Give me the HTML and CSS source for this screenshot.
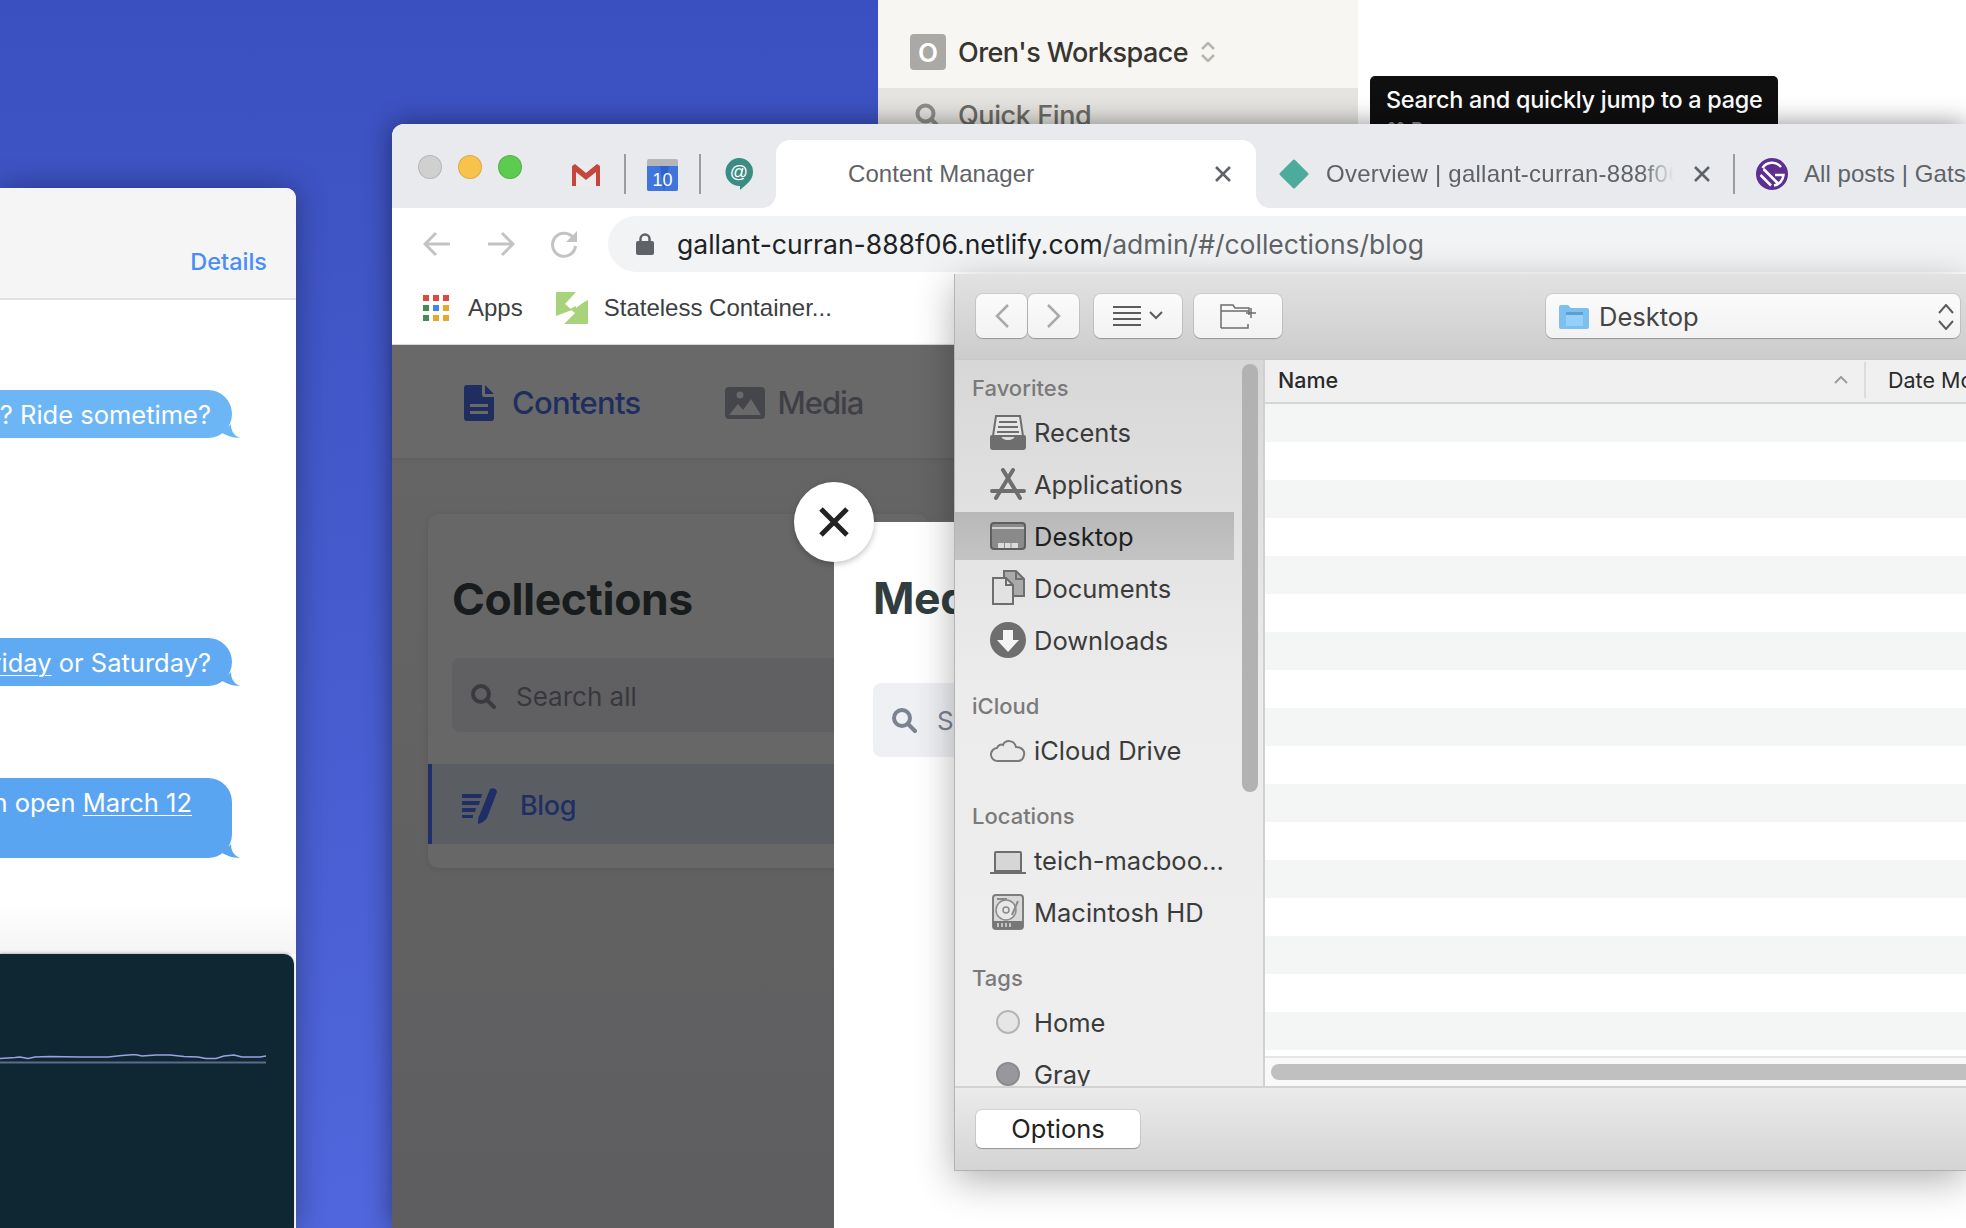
FILE: index.html
```html
<!DOCTYPE html>
<html lang="en">
<head>
    <meta charset="UTF-8">
    <title>Desktop</title>
    <link rel="stylesheet" href="styles.css">
</head>
<body>
<div class="desktop">

    <!-- notion window, mostly hidden behind chrome -->
    <div class="window notion">
        <div class="notion-side">
            <div class="workspace">
                <span class="workspace-badge">O</span>
                <span class="workspace-name">Oren's Workspace</span>
                <svg class="updown" width="14" height="20" viewBox="0 0 14 20"><path d="M1 7l6-6 6 6M1 13l6 6 6-6"/></svg>
            </div>
            <div class="quick-find">
                <svg width="24" height="24" viewBox="0 0 24 24" class="quick-icon"><circle cx="10.5" cy="10.5" r="8"/><path d="M16 16l6 6"/></svg>
                <span>Quick Find</span>
            </div>
        </div>
        <div class="notion-main">
            <div class="tooltip">
                <div>Search and quickly jump to a page</div>
                <div class="tooltip-key">⌘ P</div>
            </div>
        </div>
    </div>

    <!-- messages window, cut by the left edge -->
    <div class="window messages">
        <div class="msg-head"><a class="msg-details">Details</a></div>
        <div class="msg-thread">
            <div class="bubble bubble-a">? Ride sometime?
                <svg class="tail" width="20" height="14" viewBox="0 0 20 14"><path d="M0 6C6 4 10 2 11 0c0 6 2 11 9 14C12 14 6 11 0 8z"/></svg>
            </div>
            <div class="bubble bubble-b"><u>Friday</u> or Saturday?
                <svg class="tail" width="20" height="14" viewBox="0 0 20 14"><path d="M0 6C6 4 10 2 11 0c0 6 2 11 9 14C12 14 6 11 0 8z"/></svg>
            </div>
            <div class="bubble bubble-c">n open <u>March 12</u>
                <svg class="tail" width="20" height="14" viewBox="0 0 20 14"><path d="M0 6C6 4 10 2 11 0c0 6 2 11 9 14C12 14 6 11 0 8z"/></svg>
            </div>
        </div>
        <div class="terminal">
            <svg width="266" height="10" viewBox="0 0 266 10" class="spark">
                <path class="spark-base" d="M0 8.500H266"/>
                <path class="spark-line" d="M0 4.500l15-1 5-.5 8 1.500 7-1.500 15-.5 30 .5 28 0 14-1.500 13-1 7 1.500 14-1 14 0 14 1.500 14 .5 8 1.500 10 0 8-2.500 10-1 8 2 18 0 6-1 8 1.500 6 1 12-1 5 0"/>
            </svg>
        </div>
    </div>

    <!-- browser -->
    <div class="window chrome">
        <div class="tabstrip">
            <div class="pinned">
                <div class="lights">
                    <span class="light light-grey"></span>
                    <span class="light light-yellow"></span>
                    <span class="light light-green"></span>
                </div>
                <svg class="pin-gmail" width="28" height="22" viewBox="0 0 28 22">
                    <path fill="#ececec" d="M1 2h26v20H1z"/>
                    <path fill="#c5473c" d="M0 2v20h4V8l10 8 10-8v14h4V2l-3-2-11 9L3 0z"/>
                </svg>
                <span class="pin-sep"></span>
                <svg class="pin-cal" width="31" height="32" viewBox="0 0 31 32">
                    <path fill="#b4b6ba" d="M2 0h27a2 2 0 0 1 2 2v8H0V2a2 2 0 0 1 2-2z"/>
                    <path fill="#2f62cc" d="M0 7h31v23a2 2 0 0 1-2 2H2a2 2 0 0 1-2-2z"/>
                    <path fill="#4f86e8" d="M0 7h13l4 25H2a2 2 0 0 1-2-2zM31 7v23a2 2 0 0 1-2 2H17l5-25z" opacity=".55"/>
                    <text x="15.500" y="27" class="cal-num">10</text>
                </svg>
                <span class="pin-sep"></span>
                <svg class="pin-chat" width="28" height="32" viewBox="0 0 28 32">
                    <path fill="#3b8d84" d="M14 0a14 14 0 0 1 14 14c0 8-6 12-13 18v-4A14 14 0 0 1 14 0z"/>
                    <text x="14" y="20" class="chat-at">@</text>
                </svg>
            </div>
            <div class="tab tab-active">
                <span class="tab-title">Content Manager</span>
                <svg class="tab-x" width="18" height="18" viewBox="0 0 18 18"><path d="M2 2l14 14M16 2L2 16"/></svg>
            </div>
            <div class="tab tab-next">
                <svg width="30" height="30" viewBox="0 0 30 30"><path fill="#4dab9c" stroke="#4dab9c" stroke-width="3" stroke-linejoin="round" d="M15 2l13 13-13 13L2 15z"/></svg>
                <span class="tab-title tab-fade">Overview | gallant-curran-888f06</span>
                <svg class="tab-x" width="18" height="18" viewBox="0 0 18 18"><path d="M2 2l14 14M16 2L2 16"/></svg>
            </div>
            <div class="tab tab-last">
                <span class="tab-sep"></span>
                <svg width="32" height="32" viewBox="0 0 32 32">
                    <circle cx="16" cy="16" r="16" fill="#5d2f91"/>
                    <g fill="none" stroke="#fff" stroke-width="2.500">
                        <path d="M6.500 10A11.500 11.500 0 0 1 25 9"/>
                        <path d="M4.500 17L15 27.500M7.500 11L21.500 25"/>
                        <path d="M19 17h8.500A11.500 11.500 0 0 1 18 27.500"/>
                    </g>
                </svg>
                <span class="tab-title">All posts | Gatsby Starter</span>
            </div>
        </div>

        <div class="toolbar">
            <svg class="nav-arrow" width="28" height="26" viewBox="0 0 28 26"><path d="M27 13H2M13 2L2 13l11 11"/></svg>
            <svg class="nav-arrow" width="28" height="26" viewBox="0 0 28 26"><path d="M1 13h25M15 2l11 11-11 11"/></svg>
            <svg class="nav-arrow" width="28" height="28" viewBox="0 0 28 28"><path d="M24 9a11.500 11.500 0 1 0 1.500 7"/><path class="nav-fill" d="M27 1v11H16z"/></svg>
            <div class="omnibox">
                <svg width="18" height="22" viewBox="0 0 18 22"><path fill="none" stroke="#5f6368" stroke-width="2.500" d="M4.500 10V6a4.500 4.500 0 0 1 9 0v4"/><rect y="8" width="18" height="14" rx="2" fill="#5f6368"/></svg>
                <span class="url"><span class="url-host">gallant-curran-888f06.netlify.com</span>/admin/#/collections/blog</span>
            </div>
        </div>

        <div class="bookmarks">
            <div class="bookmark">
                <svg width="26" height="26" viewBox="0 0 26 26">
                    <path fill="#e0483d" d="M0 0h6v6H0zM10 0h6v6h-6zM20 0h6v6h-6z"/>
                    <path fill="#3f8f55" d="M0 10h6v6H0zM0 20h6v6H0z"/>
                    <path fill="#4285e8" d="M10 10h6v6h-6z"/>
                    <path fill="#e9a62f" d="M20 10h6v6h-6zM10 20h6v6h-6zM20 20h6v6h-6z"/>
                </svg>
                <span>Apps</span>
            </div>
            <div class="bookmark bookmark-second">
                <svg width="32" height="32" viewBox="0 0 32 32">
                    <path fill="#a9d37a" d="M0 0h20L9 12l7 6-16 6z"/>
                    <path fill="#a9d37a" d="M32 8v24H8l11-11-5-4z"/>
                    <path fill="#fff" d="M20 9l8-5v6l-8 6z"/>
                </svg>
                <span>Stateless Container...</span>
            </div>
        </div>

        <div class="cms">
            <div class="cms-nav">
                <div class="cms-link cms-link-on">
                    <svg width="30" height="36" viewBox="0 0 30 36">
                        <path fill="#1f2e5e" d="M3 0h15v10a2 2 0 0 0 2 2h10v21a3 3 0 0 1-3 3H3a3 3 0 0 1-3-3V3a3 3 0 0 1 3-3zM21 0l9 9h-9z"/>
                        <path fill="#696969" d="M6 19h18v3H6zM6 26h18v3H6z"/>
                    </svg>
                    <span>Contents</span>
                </div>
                <div class="cms-link">
                    <svg width="40" height="32" viewBox="0 0 40 32">
                        <rect width="40" height="32" rx="4" fill="#45464c"/>
                        <circle cx="15" cy="8" r="3.500" fill="#696969"/>
                        <path fill="#696969" d="M4 28l9-11 5 6 8-11 10 16z"/>
                    </svg>
                    <span>Media</span>
                </div>
            </div>
            <div class="cms-body">
                <div class="collections">
                    <h1 class="collections-title">Collections</h1>
                    <div class="search search-dim">
                        <svg class="search-icon" width="26" height="26" viewBox="0 0 26 26"><circle cx="11" cy="11" r="8"/><path d="M17 17l7 7"/></svg>
                        <span>Search all</span>
                    </div>
                    <div class="blog-row">
                        <svg width="36" height="36" viewBox="0 0 36 36">
                            <path fill="#1f2e66" d="M0 6h20l-1 4H0zM0 13h18l-1 4H0zM0 20h14l-1 4H0zM0 27h11v3H0z"/>
                            <path fill="#1f2e66" d="M28 1c3-2 7 0 7 3L25 30c-2 3-5 5-9 6 0-4 0-7 2-10z"/>
                        </svg>
                        <span>Blog</span>
                    </div>
                </div>
            </div>

            <!-- media library modal -->
            <div class="modal">
                <h1 class="modal-title">Media</h1>
                <div class="search search-light">
                    <svg class="search-icon" width="26" height="26" viewBox="0 0 26 26"><circle cx="11" cy="11" r="8"/><path d="M17 17l7 7"/></svg>
                    <span>Search</span>
                </div>
            </div>
            <div class="modal-close">
                <svg width="30" height="30" viewBox="0 0 30 30"><path d="M2 2l26 26M28 2L2 28"/></svg>
            </div>
        </div>
    </div>

    <!-- file picker -->
    <div class="window dialog">
        <div class="dlg-toolbar">
            <div class="dlg-pair">
                <div class="dlg-btn dlg-nav"><svg width="14" height="24" viewBox="0 0 14 24"><path d="M13 1L2 12l11 11"/></svg></div>
                <div class="dlg-btn dlg-nav"><svg width="14" height="24" viewBox="0 0 14 24"><path d="M1 1l11 11L1 23"/></svg></div>
            </div>
            <div class="dlg-btn dlg-view">
                <svg class="dlg-dark" width="50" height="22" viewBox="0 0 50 22"><path d="M0 2h28M0 8h28M0 14h28M0 20h28M37 7l6 6 6-6"/></svg>
            </div>
            <div class="dlg-btn dlg-folder">
                <svg class="dlg-light" width="36" height="26" viewBox="0 0 36 26"><path d="M1 25V2h12l2 3h14v7M1 25h27v-4M1 8h28M31 5v10M26 10h10"/></svg>
            </div>
            <div class="dlg-btn dlg-popup">
                <svg width="30" height="24" viewBox="0 0 30 24">
                    <path fill="#7cc0f0" d="M0 2a2 2 0 0 1 2-2h7l3 3h16a2 2 0 0 1 2 2v17a2 2 0 0 1-2 2H2a2 2 0 0 1-2-2z"/>
                    <path fill="#94d0f8" d="M7 7h17v14H7z"/>
                    <path fill="#5f9fd0" d="M7 7h17v3H7z"/>
                </svg>
                <span class="dlg-popup-label">Desktop</span>
                <svg class="dlg-dark" width="16" height="26" viewBox="0 0 16 26"><path d="M1 9l7-8 7 8M1 17l7 8 7-8"/></svg>
            </div>
        </div>

        <div class="dlg-main">
            <div class="dlg-side">
                <div class="side-group">
                    <div class="side-label">Favorites</div>
                    <div class="side-item">
                        <svg class="side-icon" viewBox="0 0 36 36"><path fill="#e6e6e6" stroke="#6e6e6e" stroke-width="2" d="M6 2h24l3 20H3z"/><path stroke="#6e6e6e" stroke-width="2" d="M9 8h18M8 13h20M7 18h22"/><path fill="#6e6e6e" d="M0 23a2 2 0 0 1 2-2h9c0 3 3 5 7 5s7-2 7-5h9a2 2 0 0 1 2 2v10a3 3 0 0 1-3 3H3a3 3 0 0 1-3-3z"/></svg>
                        <span>Recents</span>
                    </div>
                    <div class="side-item">
                        <svg class="side-icon" viewBox="0 0 36 36"><path fill="none" stroke="#6e6e6e" stroke-width="4" stroke-linecap="round" d="M13 4l17 28M23 4L6 32M2 25h32"/></svg>
                        <span>Applications</span>
                    </div>
                    <div class="side-item side-item-on">
                        <svg class="side-icon" viewBox="0 0 36 36"><rect x="1" y="5" width="34" height="26" rx="3" fill="#8a8a8a" stroke="#5f5f5f" stroke-width="2"/><path fill="#cfcfcf" d="M2 9h32v2H2z"/><path fill="#dcdcdc" d="M8 25h20v5H8z"/><path stroke="#8a8a8a" d="M14.500 25v5M21 25v5"/></svg>
                        <span>Desktop</span>
                    </div>
                    <div class="side-item">
                        <svg class="side-icon" viewBox="0 0 36 36"><path fill="#aaa" stroke="#6e6e6e" stroke-width="2" d="M14 1h12l8 8v17H14z"/><path fill="#e2e2e2" stroke="#6e6e6e" stroke-width="2" d="M3 8h13l7 7v19H3z"/><path fill="none" stroke="#6e6e6e" stroke-width="2" d="M16 8v7h7M26 1v8h8"/></svg>
                        <span>Documents</span>
                    </div>
                    <div class="side-item">
                        <svg class="side-icon" viewBox="0 0 36 36"><circle cx="18" cy="18" r="18" fill="#6e6e6e"/><path fill="#f4f4f4" d="M13 8h10v10h6L18 30 7 18h6z"/></svg>
                        <span>Downloads</span>
                    </div>
                </div>
                <div class="side-group">
                    <div class="side-label">iCloud</div>
                    <div class="side-item">
                        <svg class="side-icon" viewBox="0 0 36 36"><path fill="#eaeaea" stroke="#7a7a7a" stroke-width="2" d="M8 29a6.500 6.500 0 0 1-1-13c1-3 4-4 6-3 2-5 11-6 13 2 6 0 9 4 8 8-.7 4-3 6-6 6z"/></svg>
                        <span>iCloud Drive</span>
                    </div>
                </div>
                <div class="side-group">
                    <div class="side-label">Locations</div>
                    <div class="side-item">
                        <svg class="side-icon" viewBox="0 0 36 36"><path fill="#d6d6d6" stroke="#6e6e6e" stroke-width="2" d="M5 29V11a1 1 0 0 1 1-1h24a1 1 0 0 1 1 1v18z"/><path stroke="#6e6e6e" stroke-width="2" d="M0 31h36"/></svg>
                        <span>teich-macboo...</span>
                    </div>
                    <div class="side-item">
                        <svg class="side-icon" viewBox="0 0 36 36"><rect x="3" y="1" width="30" height="34" rx="3" fill="#d9d9d9" stroke="#7e7e7e" stroke-width="2"/><circle cx="16" cy="16" r="10" fill="#e8e8e8" stroke="#8a8a8a" stroke-width="1.500"/><circle cx="16" cy="16" r="3" fill="none" stroke="#8a8a8a" stroke-width="1.500"/><path stroke="#8a8a8a" stroke-width="2" d="M7 5h10M28 7l-6 14"/><rect x="3" y="27" width="30" height="8" fill="#777"/><path stroke="#ddd" stroke-width="1.500" d="M8 29v4M12 29v4M16 29v4M20 29v4"/></svg>
                        <span>Macintosh HD</span>
                    </div>
                </div>
                <div class="side-group">
                    <div class="side-label">Tags</div>
                    <div class="side-item"><span class="tag-dot tag-home"></span><span>Home</span></div>
                    <div class="side-item"><span class="tag-dot tag-gray"></span><span>Gray</span></div>
                </div>
                <div class="side-scroll"></div>
            </div>

            <div class="dlg-files">
                <div class="file-head">
                    <span class="file-col-name">Name</span>
                    <svg class="sort-caret" width="14" height="8" viewBox="0 0 14 8"><path d="M1 7l6-6 6 6"/></svg>
                    <span class="file-col-date">Date Modified</span>
                </div>
                <div class="file-rows"></div>
                <div class="file-scroll"><div class="file-thumb"></div></div>
            </div>
        </div>

        <div class="dlg-foot">
            <div class="dlg-options">Options</div>
        </div>
    </div>

</div>
</body>
</html>
```

FILE: styles.css
```css
* { box-sizing: border-box; }

html, body {
    margin: 0;
    padding: 0;
}

body {
    width: 1966px;
    height: 1228px;
    overflow: hidden;
    font-family: Inter, "Liberation Sans", sans-serif;
}

.desktop {
    position: relative;
    width: 1966px;
    height: 1228px;
    overflow: hidden;
    background: linear-gradient(#3b50c0, #5066dc);
}

.window {
    position: absolute;
    overflow: hidden;
}

/* notion */
.notion {
    left: 878px;
    top: 0;
    width: 1088px;
    height: 124px;
    display: flex;
    background: #fff;
}
.notion-side {
    width: 480px;
    background: #f7f6f3;
    padding-top: 34px;
}
.workspace {
    display: flex;
    align-items: center;
    height: 36px;
    padding-left: 32px;
    margin-bottom: 18px;
}
.workspace-badge {
    width: 36px;
    height: 36px;
    border-radius: 4px;
    background: #aaa9a5;
    color: #fff;
    font-size: 26px;
    font-weight: 600;
    line-height: 38px;
    text-align: center;
}
.workspace-name {
    margin-left: 12px;
    font-size: 27px;
    font-weight: 500;
    color: #37352f;
    letter-spacing: -.55px;
}
.updown {
    margin-left: 13px;
    fill: none;
    stroke: #b6b5b0;
    stroke-width: 2.500;
}
.quick-find {
    display: flex;
    align-items: center;
    height: 54px;
    padding-left: 37px;
    background: #e5e4e0;
    color: #6c6b66;
    font-size: 27px;
    font-weight: 500;
    letter-spacing: -.4px;
}
.quick-icon {
    fill: none;
    stroke: #8f8e8a;
    stroke-width: 4;
    margin-right: 19px;
}
.notion-main {
    flex: 1;
    padding: 76px 0 0 12px;
}
.tooltip {
    width: 408px;
    height: 80px;
    padding: 9px 16px;
    background: #0f0f0f;
    border-radius: 5px;
    color: #fff;
    font-size: 23.400px;
    font-weight: 500;
    line-height: 30px;
    letter-spacing: -.25px;
    white-space: nowrap;
}
.tooltip-key {
    color: #8c8c8c;
    font-size: 20px;
}

/* messages */
.messages {
    left: 0;
    top: 188px;
    width: 296px;
    height: 1040px;
    background: #fff;
    border-top-right-radius: 10px;
    box-shadow: 0 0 30px rgba(0, 0, 0, .35);
    display: flex;
    flex-direction: column;
}
.msg-head {
    flex: none;
    height: 112px;
    background: #f5f5f5;
    border-bottom: 2px solid #e2e2e2;
    text-align: right;
    padding: 59px 29px 0 0;
}
.msg-details {
    color: #4a8df8;
    font-size: 23.500px;
    font-weight: 500;
    line-height: 30px;
}
.msg-thread {
    flex: none;
    height: 654px;
    display: flex;
    flex-direction: column;
    align-items: flex-end;
    padding: 90px 64px 0 0;
    background: linear-gradient(#fff 92%, #f4f4f4);
}
.bubble {
    position: relative;
    flex: none;
    width: 340px;
    height: 48px;
    border-radius: 0 24px 24px 0;
    color: #fff;
    font-size: 25.500px;
    line-height: 49px;
    padding-right: 21px;
    text-align: right;
    white-space: nowrap;
}
.bubble u { text-underline-offset: 3px; text-decoration-thickness: 1px; }
.tail {
    position: absolute;
    right: -8px;
    bottom: 0;
}
.bubble-a { background: #6cb6f5; margin-bottom: 200px; }
.bubble-a .tail { fill: #6cb6f5; }
.bubble-b { background: #60aaf3; margin-bottom: 92px; }
.bubble-b .tail { fill: #60aaf3; }
.bubble-c { background: #5aa5f2; height: 80px; padding-right: 40px; }
.bubble-c .tail { fill: #5aa5f2; }

.terminal {
    flex: 1;
    margin-right: 2px;
    background: #0f2733;
    border-top-right-radius: 10px;
    box-shadow: 0 -1px 3px rgba(0, 0, 0, .25);
    padding-top: 100px;
}
.spark { display: block; }
.spark path { fill: none; }
.spark-base { stroke: #5c6b8c; stroke-width: 2; }
.spark-line { stroke: #9aa2e4; stroke-width: 1.500; }

/* chrome */
.chrome {
    left: 392px;
    top: 124px;
    width: 1574px;
    height: 1104px;
    border-radius: 12px 0 0 0;
    display: flex;
    flex-direction: column;
    background: #fff;
    box-shadow: 0 0 26px rgba(0, 0, 0, .45);
    overflow: visible;
}
.tabstrip {
    flex: none;
    height: 84px;
    padding-top: 16px;
    display: flex;
    overflow: hidden;
    border-radius: 12px 0 0 0;
    background: linear-gradient(#e8eaed 40px, #fff 40px);
}
.pinned {
    width: 384px;
    display: flex;
    align-items: center;
    padding-left: 26px;
    background: #e8eaed;
    border-bottom-right-radius: 14px;
}
.lights {
    display: flex;
    gap: 16px;
    margin-bottom: 14px;
}
.light {
    width: 24px;
    height: 24px;
    border-radius: 50%;
    border: 1px solid rgba(0, 0, 0, .12);
}
.light-grey { background: #d0d0d1; }
.light-yellow { background: #f7c34c; }
.light-green { background: #5ccb50; }
.pin-gmail { margin-left: 50px; margin-top: 2px; }
.pin-sep, .tab-sep {
    flex: none;
    width: 2px;
    height: 40px;
    background: #9a9ca0;
}
.pin-sep { margin: 0 24px; }
.pin-cal { margin: 2px -3px 0; }
.cal-num {
    fill: #fff;
    font-family: "Liberation Sans", sans-serif;
    font-size: 18px;
    text-anchor: middle;
}
.chat-at {
    fill: #fff;
    font-family: "Liberation Sans", sans-serif;
    font-size: 18px;
    text-anchor: middle;
}
.tab {
    display: flex;
    align-items: center;
    flex: none;
    white-space: nowrap;
    color: #5f6368;
    font-family: "Liberation Sans", sans-serif;
    font-size: 24px;
    overflow: hidden;
}
.tab svg { flex: none; }
.tab-title { letter-spacing: .05px; }
.tab-x {
    fill: none;
    stroke: #5f6368;
    stroke-width: 2.600;
}
.tab-active {
    width: 480px;
    padding: 0 24px 0 72px;
    justify-content: space-between;
    background: #fff;
    border-radius: 14px 14px 0 0;
}
.tab-next {
    width: 477px;
    padding-left: 23px;
    background: #e8eaed;
    border-bottom-left-radius: 14px;
}
.tab-fade {
    width: 351px;
    margin: 0 16px 0 17px;
    overflow: hidden;
    letter-spacing: .25px;
    -webkit-mask-image: linear-gradient(90deg, #000 90%, transparent 99%);
    mask-image: linear-gradient(90deg, #000 90%, transparent 99%);
}
.tab-last {
    flex: 1;
    background: #e8eaed;
    gap: 16px;
}
.tab-sep { margin-right: 5px; }

.toolbar {
    flex: none;
    height: 64px;
    padding: 8px 0 0 31px;
    display: flex;
    align-items: center;
    background: #fff;
}
.nav-arrow {
    flex: none;
    margin-right: 36px;
    fill: none;
    stroke: #c2c3c5;
    stroke-width: 3;
}
.nav-fill { fill: #c2c3c5; stroke: none; }
.nav-arrow:nth-child(2) { margin-right: 35px; }
.nav-arrow:nth-child(3) { margin-right: 30px; }
.omnibox {
    flex: 1;
    height: 56px;
    display: flex;
    align-items: center;
    gap: 23px;
    padding-left: 28px;
    border-radius: 28px 0 0 28px;
    background: #f1f3f4;
}
.url {
    font-family: Inter, "Liberation Sans", sans-serif;
    font-size: 26.500px;
    color: #5f6368;
    white-space: nowrap;
}
.url-host { color: #202124; }

.bookmarks {
    flex: none;
    height: 73px;
    padding: 0 0 1px 31px;
    display: flex;
    align-items: center;
    background: #fff;
    border-bottom: 1px solid #dedede;
    font-family: "Liberation Sans", sans-serif;
    font-size: 24px;
    color: #3c4043;
}
.bookmark {
    display: flex;
    align-items: center;
    gap: 19px;
}
.bookmark-second { margin-left: 33px; gap: 16px; }

/* netlify cms, dimmed behind the modal */
.cms {
    flex: 1;
    position: relative;
    display: flex;
    flex-direction: column;
    background: linear-gradient(#666, #5e5e60);
}
.cms-nav {
    flex: none;
    height: 113px;
    padding: 2px 0 0 72px;
    display: flex;
    align-items: center;
    gap: 84px;
    background: #696969;
    box-shadow: 0 1px 4px rgba(0, 0, 0, .1);
}
.cms-link {
    display: flex;
    align-items: center;
    gap: 13px;
    color: #3f4046;
    font-size: 31px;
    font-weight: 500;
    letter-spacing: -1.100px;
}
.cms-link-on { color: #1f2e5e; gap: 18px; letter-spacing: -.7px; }
.cms-body {
    flex: 1;
    padding: 56px 0 0 36px;
}
.collections {
    width: 500px;
    height: 354px;
    background: #676767;
    border-radius: 10px;
    box-shadow: 0 1px 6px rgba(0, 0, 0, .1);
    padding-top: 1px;
}
.collections-title {
    width: fit-content;
    margin: 54px 0 0 24px;
    color: #181c1d;
    font-size: 44.500px;
    font-weight: 700;
    line-height: 60px;
    letter-spacing: -.4px;
}
.search {
    display: flex;
    align-items: center;
    height: 74px;
    border-radius: 8px;
    font-size: 26px;
}
.search-icon {
    flex: none;
    fill: none;
    stroke-width: 4;
    stroke-linecap: round;
}
.search-dim {
    margin: 29px 0 0 24px;
    padding: 2px 0 0 18px;
    gap: 20px;
    background: #606063;
    color: #38383c;
}
.search-dim .search-icon { stroke: #3a3b40; }
.blog-row {
    height: 80px;
    margin-top: 32px;
    padding: 3px 0 0 30px;
    display: flex;
    align-items: center;
    gap: 22px;
    background: #5a5e62;
    border-left: 4px solid #202f6b;
    color: #1f2e66;
    font-size: 27px;
    font-weight: 500;
    letter-spacing: -.4px;
}

.modal {
    position: absolute;
    left: 442px;
    top: 177px;
    right: 0;
    bottom: 0;
    background: #fff;
    padding: 46px 0 0 39px;
}
.modal-title {
    margin: 0;
    color: #313d3e;
    font-size: 44.500px;
    font-weight: 700;
    line-height: 60px;
    letter-spacing: -.4px;
}
.search-light {
    width: 400px;
    margin-top: 55px;
    padding-left: 18px;
    gap: 20px;
    background: #eff0f4;
    color: #7b8290;
}
.search-light .search-icon { stroke: #7b8290; }
.modal-close {
    position: absolute;
    left: 402px;
    top: 137px;
    width: 80px;
    height: 80px;
    border-radius: 50%;
    background: #fff;
    box-shadow: 0 2px 6px rgba(0, 0, 0, .25);
    display: flex;
    align-items: center;
    justify-content: center;
}
.modal-close svg {
    fill: none;
    stroke: #222;
    stroke-width: 5;
}

/* file picker */
.dialog {
    left: 954px;
    top: 274px;
    width: 1012px;
    height: 897px;
    display: flex;
    flex-direction: column;
    border-left: 1px solid #b4b4b4;
    border-bottom: 1px solid #b0b0b0;
    background: #ececec;
    box-shadow: 0 10px 36px rgba(0, 0, 0, .3);
    overflow: visible;
    font-family: Inter, "Liberation Sans", sans-serif;
}
.dlg-toolbar {
    flex: none;
    height: 86px;
    padding: 20px 6px 0 21px;
    display: flex;
    align-items: flex-start;
    background: linear-gradient(#e2e2e2, #cccccc);
    border-bottom: 1px solid #c8c8c8;
    overflow: hidden;
}
.dlg-pair { display: flex; gap: 1px; }
.dlg-btn {
    display: flex;
    align-items: center;
    justify-content: center;
    height: 44px;
    background: linear-gradient(#fbfbfb, #f2f2f2);
    border-radius: 7px;
    box-shadow: 0 0 0 1px rgba(0, 0, 0, .08), 0 1px 1px rgba(0, 0, 0, .22);
}
.dlg-nav { width: 51px; }
.dlg-nav svg {
    fill: none;
    stroke: #a9a9a9;
    stroke-width: 2.500;
}
.dlg-view { width: 88px; margin-left: 15px; }
.dlg-folder { width: 88px; margin-left: 12px; }
.dlg-dark {
    flex: none;
    fill: none;
    stroke: #5c5c5c;
    stroke-width: 2;
}
.dlg-light {
    fill: none;
    stroke: #6c6c6c;
    stroke-width: 1.500;
}
.dlg-popup {
    width: 414px;
    margin-left: 264px;
    padding: 1px 6px 0 13px;
    justify-content: flex-start;
    color: #444;
    font-size: 25.500px;
}
.dlg-popup svg:first-child { flex: none; }
.dlg-popup-label { flex: 1; margin-left: 10px; }

.dlg-main {
    flex: 1;
    min-height: 0;
    display: flex;
}
.dlg-side {
    position: relative;
    flex: none;
    width: 310px;
    padding-top: 13px;
    overflow: hidden;
    background: linear-gradient(#d7d7d7, #ececec 45%, #eeeeee);
    border-right: 2px solid #d0d0d0;
}
.side-group {
    display: flex;
    flex-direction: column;
    gap: 4px;
    margin-bottom: 27px;
}
.side-label {
    height: 30px;
    margin-bottom: 1px;
    padding-left: 17px;
    color: #7a7a7a;
    font-size: 22px;
    font-weight: 500;
    line-height: 30px;
}
.side-item {
    flex: none;
    width: 279px;
    height: 48px;
    padding-left: 35px;
    display: flex;
    align-items: center;
    gap: 8px;
    color: #3b3b3b;
    font-size: 25.500px;
    white-space: nowrap;
}
.side-item span:last-child { padding-top: 1px; }
.side-item-on {
    background: linear-gradient(#b8b8b8, #c4c4c4);
    color: #1f1f1f;
}
.side-icon {
    flex: none;
    width: 36px;
    height: 36px;
}
.tag-dot {
    flex: none;
    width: 24px;
    height: 24px;
    margin: 0 6px;
    border-radius: 50%;
}
.tag-home {
    background: #e6e6e6;
    border: 2px solid #b5b5b5;
}
.tag-gray {
    background: #98989c;
    border: 2px solid #8c8c90;
}
.side-scroll {
    position: absolute;
    left: 287px;
    top: 4px;
    width: 16px;
    height: 428px;
    border-radius: 8px;
    background: #b2b2b2;
}

.dlg-files {
    flex: 1;
    min-width: 0;
    display: flex;
    flex-direction: column;
    background: #fff;
}
.file-head {
    flex: none;
    height: 44px;
    display: flex;
    align-items: center;
    padding: 0 0 2px 13px;
    background: #f0f0f0;
    border-bottom: 2px solid #d6d6d6;
    color: #2a2a2a;
    font-size: 21.500px;
    font-weight: 500;
    white-space: nowrap;
}
.file-col-name { flex: none; width: 556px; }
.sort-caret {
    flex: none;
    fill: none;
    stroke: #9c9c9c;
    stroke-width: 2;
}
.file-col-date {
    flex: none;
    margin-left: 16px;
    padding-left: 22px;
    border-left: 2px solid #dcdcdc;
    line-height: 36px;
    font-weight: 400;
}
.file-rows {
    flex: 1;
    background: repeating-linear-gradient(#f4f5f5 0 38px, #fff 38px 76px);
}
.file-scroll {
    flex: none;
    height: 30px;
    padding: 6px 0 0 6px;
    background: #f9f9f9;
    border-top: 2px solid #e6e6e6;
}
.file-thumb {
    height: 16px;
    border-radius: 8px 0 0 8px;
    background: #c0c0c0;
}

.dlg-foot {
    flex: none;
    height: 84px;
    padding: 22px 0 0 21px;
    background: linear-gradient(#ebebeb, #d4d4d4);
    border-top: 2px solid #d2d2d2;
}
.dlg-options {
    width: 164px;
    height: 38px;
    background: #fff;
    border-radius: 6px;
    box-shadow: 0 0 0 1px rgba(0, 0, 0, .08), 0 1px 1px rgba(0, 0, 0, .25);
    color: #222;
    font-size: 25.500px;
    line-height: 38px;
    text-align: center;
}
```
